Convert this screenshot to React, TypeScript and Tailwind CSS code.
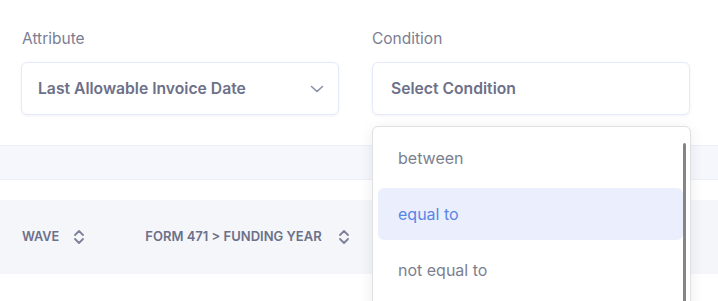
import React from "react";

const SortIcon = () => (
  <svg width="12" height="16" viewBox="0 0 12 16" fill="none" stroke="#7d8199" strokeWidth="1.8" strokeLinecap="round" strokeLinejoin="round">
    <path d="M2 6 L6 2 L10 6" />
    <path d="M2 10 L6 14 L10 10" />
  </svg>
);

export default function App() {
  return (
    <div className="relative w-[718px] h-[301px] overflow-hidden bg-white" style={{ fontFamily: "Inter, 'Noto Sans', sans-serif" }}>
      <div className="flex gap-[33px] pl-[21px] pt-[29px]">
        <div className="w-[318px]">
          <div className="text-[15.5px] leading-[20px] text-[#7a7e94] pl-[1px] mb-[13px]">Attribute</div>
          <div className="h-[53px] rounded-[6px] border border-[#e4e9fb] shadow-[0_1px_3px_rgba(30,40,90,0.06)] flex items-center justify-between pl-[16px] pr-[14px]">
            <span className="text-[15.7px] font-semibold text-[#6c7089]">Last Allowable Invoice Date</span>
            <svg width="14" height="8" viewBox="0 0 14 8" fill="none" stroke="#8a8ea6" strokeWidth="1.6" strokeLinecap="round" strokeLinejoin="round">
              <path d="M1.5 1.5 L7 6.5 L12.5 1.5" />
            </svg>
          </div>
        </div>
        <div className="w-[318px]">
          <div className="text-[15.5px] leading-[20px] text-[#7a7e94] mb-[13px]">Condition</div>
          <div className="h-[53px] rounded-[6px] border border-[#e4e9fb] shadow-[0_1px_3px_rgba(30,40,90,0.06)] flex items-center pl-[18px]">
            <span className="text-[15.7px] font-semibold text-[#6c7089]">Select Condition</span>
          </div>
        </div>
      </div>

      <div className="mt-[30px] h-[35px] bg-[#f6f7fc] border-y border-[#eceffa]" />

      <div className="mt-[20px] h-[74px] bg-[#f5f6fa] flex items-center pl-[22px]">
        <div className="flex items-center gap-[14px]">
          <span className="text-[12.7px] font-semibold text-[#6c7089]">WAVE</span>
          <SortIcon />
        </div>
        <div className="flex items-center gap-[16px] ml-[60px]">
          <span className="text-[13px] font-semibold text-[#6c7089]">FORM 471 &gt; FUNDING YEAR</span>
          <SortIcon />
        </div>
      </div>

      <div className="absolute left-[372px] top-[126px] w-[319px] h-[200px] bg-white rounded-[6px] border border-[#dfe0e4] shadow-[0_2px_14px_rgba(0,0,0,0.08)] px-[5px] pt-[5px]">
        <div className="flex flex-col gap-[4px] pr-[2px]">
          <div className="h-[52px] flex items-center pl-[20px] text-[16px] text-[#7c7f90]">between</div>
          <div className="h-[52px] flex items-center pl-[20px] text-[16px] text-[#5885e6] bg-[#ebeffd] rounded-[6px]">equal to</div>
          <div className="h-[52px] flex items-center pl-[20px] text-[16px] text-[#7c7f90]">not equal to</div>
        </div>
        <div className="absolute right-[4px] top-[16px] w-[3px] h-[200px] bg-[#858585] rounded-full" />
      </div>
    </div>
  );
}
